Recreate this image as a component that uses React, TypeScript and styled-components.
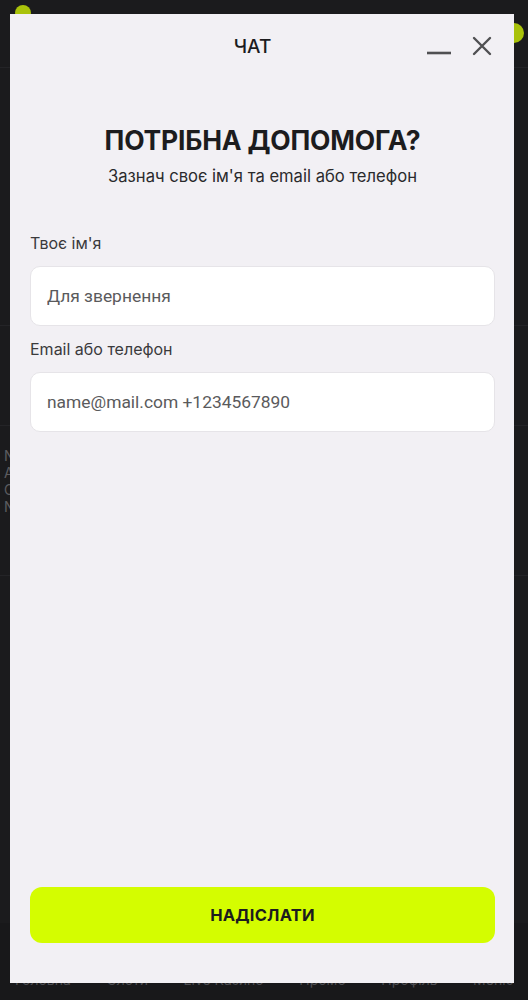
import React, { useState } from "react";
import styled, { createGlobalStyle } from "styled-components";

const GlobalStyle = createGlobalStyle`
  * { box-sizing: border-box; }
  html, body {
    margin: 0;
    padding: 0;
    background: #1b1b1d;
  }
  body {
    font-family: Inter, "Noto Sans", sans-serif;
  }
`;

const Page = styled.div`
  position: relative;
  height: 1000px;
  overflow: hidden;
  background: #1b1b1d;
  display: flex;
  flex-direction: column;
`;

const TopBar = styled.div`
  height: 68px;
  display: flex;
  align-items: flex-start;
  justify-content: space-between;
  padding: 5px 4px 0 15px;
  border-bottom: 1px solid #242427;
`;

const Dot = styled.div<{ $size: number; $offset: number }>`
  width: ${(p) => p.$size}px;
  height: ${(p) => p.$size}px;
  margin-top: ${(p) => p.$offset}px;
  border-radius: 50%;
  background: #a9c20a;
`;

const Block = styled.div<{ $h: number }>`
  height: ${(p) => p.$h}px;
  border-bottom: 1px solid #242427;
`;

const SideText = styled.div`
  padding: 22px 0 0 4px;
  display: flex;
  flex-direction: column;
  gap: 2px;
  color: #5c5c60;
  font-size: 14px;
  line-height: 15px;
`;

const Spacer = styled.div`
  flex: 1;
`;

const BottomNav = styled.nav`
  height: 77px;
  background: #18181a;
  display: flex;
  justify-content: space-between;
  padding: 48px 14px 0 15px;
  color: #4e4e52;
  font-size: 14px;
`;

const Overlay = styled.div`
  position: absolute;
  top: 14px;
  left: 10px;
  right: 14px;
  bottom: 17px;
  background: #f2f0f4;
  display: flex;
  flex-direction: column;
  padding: 0 19px 40px 20px;
`;

const Header = styled.div`
  height: 62px;
  display: flex;
  align-items: center;
  justify-content: center;
  position: relative;
`;

const HeaderTitle = styled.div`
  font-family: Inter, sans-serif;
  font-size: 19px;
  font-weight: 500;
  color: #1c1c1e;
  margin-right: 20px;
  margin-top: 2px;
`;

const HeaderActions = styled.div`
  position: absolute;
  right: 0;
  top: 20px;
  display: flex;
  align-items: center;
  gap: 17px;
`;

const IconButton = styled.button`
  border: 0;
  background: transparent;
  padding: 0;
  width: 26px;
  height: 24px;
  display: flex;
  align-items: center;
  justify-content: center;
  cursor: pointer;
`;

const Heading = styled.h1`
  margin: 48px 0 0;
  text-align: center;
  font-family: Inter, sans-serif;
  font-size: 26.5px;
  line-height: 32px;
  font-weight: 700;
  letter-spacing: -0.2px;
  color: #1c1c1e;
`;

const Subtitle = styled.p`
  margin: 9px 0 0;
  text-align: center;
  font-family: Inter, sans-serif;
  font-size: 16.6px;
  line-height: 22px;
  color: #2a2a2c;
`;

const Form = styled.form`
  flex: 1;
  display: flex;
  flex-direction: column;
  margin-top: 46px;
`;

const Label = styled.label<{ $top?: number }>`
  display: block;
  margin-top: ${(p) => p.$top ?? 0}px;
  font-family: Inter, sans-serif;
  font-size: 16px;
  line-height: 20px;
  color: #3a3a3c;
`;

const Input = styled.input`
  display: block;
  width: 100%;
  height: 60px;
  margin-top: 13px;
  border: 1px solid #e6e4e8;
  border-radius: 10px;
  background: #ffffff;
  padding: 0 16px;
  font-family: Roboto, sans-serif;
  font-size: 17.4px;
  color: #1c1c1e;
  outline: none;

  &::placeholder {
    color: #5a5a5c;
  }
`;

const Submit = styled.button`
  margin-top: auto;
  height: 56px;
  width: 100%;
  border: 0;
  border-radius: 12px;
  background: #d4fd00;
  font-family: Inter, sans-serif;
  font-size: 16.5px;
  font-weight: 700;
  letter-spacing: 0.2px;
  color: #1c1c1e;
  cursor: pointer;
`;

const navItems = ["Головна", "Слоти", "Live Казино", "Промо", "Профіль", "Меню"];

export default function App() {
  const [name, setName] = useState("");
  const [contact, setContact] = useState("");

  return (
    <>
      <GlobalStyle />
      <Page>
        <TopBar>
          <Dot $size={16} $offset={0} />
          <Dot $size={20} $offset={18} />
        </TopBar>
        <Block $h={258} />
        <Block $h={100} />
        <Block $h={150}>
          <SideText>
            <span>N</span>
            <span>A</span>
            <span>C</span>
            <span>N</span>
          </SideText>
        </Block>
        <Spacer />
        <BottomNav>
          {navItems.map((item) => (
            <span key={item}>{item}</span>
          ))}
        </BottomNav>

        <Overlay>
          <Header>
            <HeaderTitle>ЧАТ</HeaderTitle>
            <HeaderActions>
              <IconButton aria-label="Згорнути">
                <svg width="26" height="24" viewBox="0 0 26 24">
                  <line x1="1" y1="19" x2="25" y2="19" stroke="#505052" strokeWidth="2.6" />
                </svg>
              </IconButton>
              <IconButton aria-label="Закрити">
                <svg width="22" height="22" viewBox="0 0 22 22">
                  <path d="M3 3 L19 19 M19 3 L3 19" stroke="#505052" strokeWidth="2.4" strokeLinecap="round" />
                </svg>
              </IconButton>
            </HeaderActions>
          </Header>

          <Heading>ПОТРІБНА ДОПОМОГА?</Heading>
          <Subtitle>Зазнач своє ім'я та email або телефон</Subtitle>

          <Form onSubmit={(e) => e.preventDefault()}>
            <Label htmlFor="name">Твоє ім'я</Label>
            <Input
              id="name"
              value={name}
              onChange={(e) => setName(e.target.value)}
              placeholder="Для звернення"
            />
            <Label htmlFor="contact" $top={13}>
              Email або телефон
            </Label>
            <Input
              id="contact"
              value={contact}
              onChange={(e) => setContact(e.target.value)}
              placeholder="name@mail.com +1234567890"
            />
            <Submit type="submit">НАДІСЛАТИ</Submit>
          </Form>
        </Overlay>
      </Page>
    </>
  );
}
